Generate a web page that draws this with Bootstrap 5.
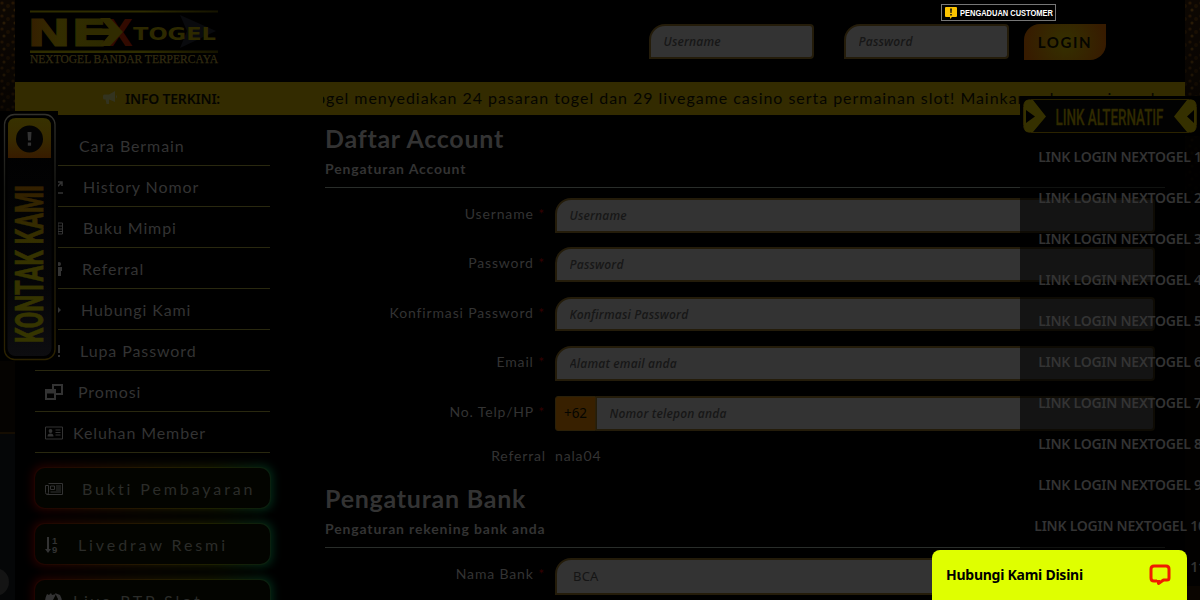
<!DOCTYPE html>
<html lang="id">
<head>
  <meta charset="UTF-8">
  <title>Nextogel - Daftar Account</title>
  <link href="https://cdn.jsdelivr.net/npm/bootstrap@5.3.3/dist/css/bootstrap.min.css" rel="stylesheet">
  <style>
    body {
      height: 600px;
      overflow: hidden;
      position: relative;
      background: #050301;
      color: #333;
      font-family: Lato, "Open Sans", sans-serif;
      font-size: 14px;
    }
    .backdrop { position: absolute; inset: 0; }
    .page { width: 1170px; height: 600px; background: #000; position: relative; }
    .topbar { height: 82px; padding: 10px 79px 0 15px; }
    .login-form { gap: 30px; padding-top: 14px; }
    .field {
      background: #333;
      border: 2px solid #241c0a;
      border-radius: 16px 4px 4px 0;
      color: #151515;
      height: 35px;
      padding: 0 12.5px;
      font-size: 12px;
      letter-spacing: .18px;
      box-shadow: none;
    }
    .field::placeholder { color: #171717; opacity: 1; font-family: "Open Sans", sans-serif; font-style: italic; font-weight: 600; }
    .login-form .field { width: 165px; }
    .btn-login {
      width: 82px; height: 36px; margin-left: -15px; padding: 0;
      border: 0; border-radius: 16px 0;
      background: radial-gradient(circle at 50% 50%, #353000 0, #352b00 25%, #371b00 90%);
      color: #050500; font-weight: 700; font-size: 15px; letter-spacing: 1.6px;
    }
    .infobar { height: 33px; background: #332b00; color: #050500; }
    .info-title { width: 308px; padding-left: 88px; padding-bottom: 1px; gap: 7px; font-family: "Noto Sans", sans-serif; font-weight: 600; font-size: 14px; letter-spacing: -.2px; }
    .info-text { width: 842px; overflow: hidden; white-space: nowrap; font-size: 16px; letter-spacing: .96px; line-height: 31px; }
    .info-text span { margin-left: -7px; }
    .sidebar { width: 275px; flex: none; padding: 10px 20px 0; }
    .side-item { height: 41px; border-bottom: 1px solid #29280f; padding: 2px 0 0 10px; font-size: 16px; letter-spacing: .9px; }
    .side-item svg, .glow-btn svg { width: 18px; height: 16px; flex: none; }
    .glow-btn { position: relative; height: 40px; margin-top: 16px; border-radius: 10px; background: #030400; padding: 1px 0 0 10px; font-size: 16px; letter-spacing: 2.9px; white-space: nowrap; color: #2b2c29; }
    .glow-btn:first-child { margin-top: 15px; }
    .glow-btn::before { content: ""; position: absolute; inset: -1px; z-index: -1; border-radius: 11px; background: linear-gradient(90deg, #200400, #241a00 50%, #1d2000 75%, #0a200f); }
    .glow-btn::after { content: ""; position: absolute; inset: -3px; z-index: -2; border-radius: 12px; filter: blur(4px); background: linear-gradient(90deg, #240000, #1b1200 45%, #161a00 75%, #002a18); }
    .glows { position: relative; z-index: 0; }
    .form-area { width: 875px; flex: none; padding: 6px 0 0 35px; }
    .form-area h2 { font-size: 25px; font-weight: 700; letter-spacing: .75px; line-height: 34px; margin: 0; }
    .form-area h3 { font-size: 14px; font-weight: 700; letter-spacing: .85px; line-height: 20px; margin: 4px 0 0; }
    .divider { width: 840px; height: 1px; background: #292d2a; margin: 8px 0 10px; }
    .form-row { height: 49.4px; }
    .form-row label { width: 230px; flex: none; padding: 5px 10px 0 0; text-align: right; font-size: 14px; letter-spacing: .85px; }
    .form-row label i { color: #330000; font-style: normal; }
    .form-row .field { width: 600px; height: 34.5px; flex: none; }
    .form-row .prefix { width: 41px; height: 35px; flex: none; background: #382000; border: 1px solid #2b2008; border-radius: 3px 0 0 3px; color: #050500; font-family: "Noto Sans", sans-serif; font-size: 13.5px; }
    .form-row .phone { width: 559px; height: 35px; border-radius: 0 4px 4px 0; border-left-width: 1px; }
    .form-row .bank { height: 37px; padding-left: 16px; font-size: 13px; font-family: "Noto Sans", sans-serif; }
    .referral { height: 36px; letter-spacing: .85px; line-height: 20px; padding-top: 1px; }
    .referral label { width: 230px; padding-right: 9px; text-align: right; }
    .link-panel { position: absolute; left: 1020px; top: 96px; width: 200px; height: 504px; background: rgba(0, 0, 0, .6); }
    .link-panel svg { display: block; }
    .link-panel a { height: 41px; display: block; text-align: center; white-space: nowrap; color: #333; text-decoration: none; font-family: "Noto Sans", sans-serif; font-weight: 600; font-size: 14px; line-height: 41px; letter-spacing: -.25px; }
    .contact-tab { position: absolute; left: 0; top: 111px; }
    .complaint { position: absolute; left: 941px; top: 4px; width: 115px; height: 17px; border: 1px solid #777; background: #000; padding-left: 3px; gap: 3px; }
    .chat-bar { position: absolute; left: 932px; top: 550px; width: 255px; height: 50px; background: #dfff00; border-radius: 8px 8px 0 0; color: #000; padding: 0 16px 1px 14px; font-family: "Noto Sans", sans-serif; font-weight: 700; font-size: 14px; letter-spacing: -.25px; }
  </style>
</head>
<body>
<!-- dim casino background at the page edges -->
<svg class="backdrop" width="1200" height="600">
  <defs>
    <pattern id="sparks" width="11" height="13" patternUnits="userSpaceOnUse">
      <circle cx="2" cy="3" r="1.6" fill="#261604"/><circle cx="8" cy="6" r="1.9" fill="#1c1002"/><circle cx="4" cy="10" r="1.500" fill="#2d1d06"/>
    </pattern>
    <linearGradient id="fadeDown" x2="0" y2="1"><stop offset="0" stop-color="#000" stop-opacity="0"/><stop offset="1" stop-color="#000"/></linearGradient>
  </defs>
  <rect width="1200" height="230" fill="#0d0702"/>
  <rect width="15" height="230" fill="url(#sparks)"/>
  <rect x="1185" width="15" height="230" fill="url(#sparks)"/>
  <rect width="1200" height="230" fill="url(#fadeDown)"/>
  <rect y="432" width="15" height="168" fill="#050607"/>
  <rect y="432" width="15" height="2" fill="#150d02"/>
  <circle cx="-5" cy="582" r="14" fill="#141414"/>
  <rect x="1185" y="586" width="15" height="14" fill="#1a0d02"/>
</svg>

<div class="page mx-auto">
  <header class="topbar d-flex justify-content-between align-items-start">
    <svg width="190" height="56" viewBox="30 10 190 56">
      <defs>
        <linearGradient id="gold"><stop offset="0" stop-color="#351d00"/><stop offset=".4" stop-color="#332d00"/><stop offset="1" stop-color="#2c2a00"/></linearGradient>
        <linearGradient id="goldLine"><stop offset="0" stop-color="#2e2c00"/><stop offset=".6" stop-color="#2e2c00"/><stop offset="1" stop-color="#151300"/></linearGradient>
      </defs>
      <path d="M180 15l36 16-36 17 7-17z" fill="#090a0d"/>
      <rect x="30" y="10.500" width="188" height="2" fill="url(#goldLine)"/>
      <rect x="30" y="50.500" width="188" height="2.500" fill="url(#goldLine)"/>
      <text x="27" y="45.500" font-family="DejaVu Sans" font-weight="700" font-size="38" fill="url(#gold)" stroke="url(#gold)" stroke-width=".8" textLength="80" lengthAdjust="spacingAndGlyphs">NE</text>
      <text x="105" y="45.500" font-family="DejaVu Sans" font-weight="700" font-size="38" fill="#320a00" textLength="28" lengthAdjust="spacingAndGlyphs">X</text>
      <path d="M84 28.500h25l-9-10.500h10l13 14-13 14h-10l9-11H84z" fill="#302b00"/>
      <text x="133" y="40" font-family="DejaVu Sans" font-weight="700" font-size="18.500" fill="#2d2900" textLength="83" lengthAdjust="spacingAndGlyphs">TOGEL</text>
      <text x="30" y="62.800" font-family="Liberation Serif" font-size="11.500" fill="#332c10" stroke="#332c10" stroke-width=".25" textLength="188" lengthAdjust="spacingAndGlyphs">NEXTOGEL BANDAR TERPERCAYA</text>
    </svg>
    <form class="login-form d-flex">
      <input type="text" class="form-control field" placeholder="Username">
      <input type="password" class="form-control field" placeholder="Password">
      <button type="button" class="btn btn-login">LOGIN</button>
    </form>
  </header>

  <div class="infobar d-flex">
    <div class="info-title d-flex align-items-center">
      <svg width="15" height="14" viewBox="0 0 15 14" fill="#33331f"><path d="M12 0v11L6 8.500V13H3.500L2.500 8.500H1Q0 8.500 0 7V5q0-1.500 1-1.500h5zM13 4q2 1.500 0 3.500z"/></svg>
      INFO TERKINI:
    </div>
    <div class="info-text"><span>ogel menyediakan 24 pasaran togel dan 29 livegame casino serta permainan slot! Mainkan sekarang juga dan menangkan</span></div>
  </div>

  <div class="d-flex">
    <aside class="sidebar">
      <div class="side-item d-flex align-items-center"><svg></svg><span style="margin-left:16px">Cara Bermain</span></div>
      <div class="side-item d-flex align-items-center">
        <svg viewBox="0 0 18 16" fill="none" stroke="#333" stroke-width="1.500"><path d="M1 1v13h17M4 11l4-5 3 3 6-6M13 3h4v4"/></svg><span style="margin-left:20px">History Nomor</span>
      </div>
      <div class="side-item d-flex align-items-center">
        <svg viewBox="0 0 18 16" fill="none" stroke="#333"><path d="M1 3h16.500v11H1zM13 3v11M13 6h4M13 9h4M13 11.500h4"/></svg><span style="margin-left:20px">Buku Mimpi</span>
      </div>
      <div class="side-item d-flex align-items-center">
        <svg viewBox="0 0 18 16" fill="#333"><circle cx="4" cy="4" r="2"/><circle cx="14" cy="3" r="2"/><path d="M11 6h6v4h-1v5h-4v-5h-1zM1 7h6v4H6v4H2v-4H1z"/></svg><span style="margin-left:19px">Referral</span>
      </div>
      <div class="side-item d-flex align-items-center">
        <svg viewBox="0 0 18 16" fill="#333"><path d="M0 2h10l6 6-5 5H0z"/></svg><span style="margin-left:18px">Hubungi Kami</span>
      </div>
      <div class="side-item d-flex align-items-center">
        <svg viewBox="0 0 18 16" fill="#333"><path d="M13 2h2v8h-2zM13 12h2v2h-2z"/></svg><span style="margin-left:17px">Lupa Password</span>
      </div>
      <div class="side-item d-flex align-items-center">
        <svg viewBox="0 0 18 16" fill="none" stroke="#333" stroke-width="2"><path d="M8 5V1h9v9h-6M1 6h9v9H1z"/><path d="M1 7.500h9" stroke-width="4"/></svg><span style="margin-left:15px">Promosi</span>
      </div>
      <div class="side-item d-flex align-items-center">
        <svg viewBox="0 0 18 16" fill="#333"><path d="M.5 2h17v12H.5z" fill="none" stroke="#333"/><circle cx="5.500" cy="6" r="1.900"/><path d="M2.500 11.500q0-3 3-3t3 3zM10.500 4.500h5v1h-5zM10.500 7h5v1h-5zM10.500 9.500h5v1h-5z"/></svg><span style="margin-left:10px">Keluhan Member</span>
      </div>
      <div class="glows">
        <div class="glow-btn d-flex align-items-center">
          <svg viewBox="0 0 18 16" fill="none" stroke="#333"><path d="M3.500 2.500h14v11h-15q-2 0-2-2v-7h3v7q0 2-1.500 2M5.500 5h4v3.500h-4zM11 5h5M11 7h5M11 9h5M5.500 11h10.500"/></svg><span style="margin-left:19px">Bukti Pembayaran</span>
        </div>
        <div class="glow-btn d-flex align-items-center">
          <svg viewBox="0 0 18 16" fill="#333"><path d="M2 0h2v12h2l-3 4-3-4h2z"/><text x="7" y="7" font-family="Liberation Sans" font-weight="700" font-size="9.500">1</text><text x="7" y="16" font-family="Liberation Sans" font-weight="700" font-size="9.500">9</text></svg><span style="margin-left:15px">Livedraw Resmi</span>
        </div>
        <div class="glow-btn d-flex align-items-center">
          <svg viewBox="0 0 18 16" fill="#333"><path d="M2 1q-5 10 3 14h6q9-4 4-13l-5-2 3 6-1 4-4-3 3-6-4 1-1-2-2 2z"/></svg><span style="margin-left:10px">Live RTP Slot</span>
        </div>
      </div>
    </aside>

    <main class="form-area">
      <h2>Daftar Account</h2>
      <h3>Pengaturan Account</h3>
      <div class="divider"></div>
      <div class="form-row d-flex"><label>Username <i>*</i></label><input class="form-control field" placeholder="Username"></div>
      <div class="form-row d-flex"><label>Password <i>*</i></label><input class="form-control field" placeholder="Password"></div>
      <div class="form-row d-flex"><label>Konfirmasi Password <i>*</i></label><input class="form-control field" placeholder="Konfirmasi Password"></div>
      <div class="form-row d-flex"><label>Email <i>*</i></label><input class="form-control field" placeholder="Alamat email anda"></div>
      <div class="form-row d-flex">
        <label>No. Telp/HP <i>*</i></label>
        <span class="prefix d-flex align-items-center justify-content-center">+62</span>
        <input class="form-control field phone" placeholder="Nomor telepon anda">
      </div>
      <div class="d-flex referral"><label>Referral</label><span>nala04</span></div>
      <h2>Pengaturan Bank</h2>
      <h3>Pengaturan rekening bank anda</h3>
      <div class="divider"></div>
      <div class="form-row d-flex"><label>Nama Bank <i>*</i></label><div class="form-control field bank d-flex align-items-center">BCA</div></div>
    </main>
  </div>
</div>

<nav class="link-panel">
  <svg width="180" height="40" viewBox="1020 96 180 40">
    <rect x="1020" y="96" width="180" height="40" fill="#000"/>
    <rect x="1023.500" y="99.500" width="173" height="33" rx="7" fill="#020202" stroke="#2b2300"/>
    <path d="M1024 105q0-5 4-5h5l13 16.500-13 15.500h-5q-4 0-4-5zM1196 105q0-5-4-5h-5l-13 16.500 13 15.500h5q4 0 4-5z" fill="#353000"/>
    <path d="M1026 110l9 6.500-9 6.500zM1194 110l-7 6.500 7 6.500z" fill="#000"/>
    <text x="1055.500" y="124.500" font-family="Roboto" font-weight="500" font-size="21.500" fill="#302a00" stroke="#302a00" stroke-width=".3" textLength="108" lengthAdjust="spacingAndGlyphs">LINK ALTERNATIF</text>
  </svg>
  <a href="#">LINK LOGIN NEXTOGEL 1</a>
  <a href="#">LINK LOGIN NEXTOGEL 2</a>
  <a href="#">LINK LOGIN NEXTOGEL 3</a>
  <a href="#">LINK LOGIN NEXTOGEL 4</a>
  <a href="#">LINK LOGIN NEXTOGEL 5</a>
  <a href="#">LINK LOGIN NEXTOGEL 6</a>
  <a href="#">LINK LOGIN NEXTOGEL 7</a>
  <a href="#">LINK LOGIN NEXTOGEL 8</a>
  <a href="#">LINK LOGIN NEXTOGEL 9</a>
  <a href="#">LINK LOGIN NEXTOGEL 10</a>
  <a href="#">LINK LOGIN NEXTOGEL 11</a>
</nav>

<svg class="contact-tab" width="58" height="250" viewBox="0 111 58 250">
  <defs>
    <linearGradient id="tabTop" x2="0" y2="1"><stop offset="0" stop-color="#373100"/><stop offset=".5" stop-color="#382b00"/><stop offset="1" stop-color="#371b00"/></linearGradient>
    <linearGradient id="tabBody" x2="0" y2="1"><stop offset="0" stop-color="#000"/><stop offset=".7" stop-color="#050507"/><stop offset="1" stop-color="#0d0d10"/></linearGradient>
    <linearGradient id="tabEdge" x2="0" y2="1"><stop offset="0" stop-color="#33322c"/><stop offset=".3" stop-color="#1a1a16"/><stop offset="1" stop-color="#2c2200"/></linearGradient>
    <linearGradient id="tabText"><stop offset="0" stop-color="#353500"/><stop offset=".6" stop-color="#353200"/><stop offset="1" stop-color="#331f00"/></linearGradient>
  </defs>
  <rect y="111" width="58" height="250" fill="#000"/>
  <rect x="4.500" y="114.500" width="50.500" height="245" rx="10" fill="#000" stroke="url(#tabEdge)" stroke-width="1.300"/>
  <rect x="7.500" y="118" width="44" height="238" rx="8" fill="url(#tabBody)"/>
  <path d="M8 158v-32q0-8 8-8h27q8 0 8 8v32z" fill="url(#tabTop)"/>
  <circle cx="29.500" cy="139" r="13.500" fill="#030303"/>
  <path d="M27.500 132h4l-.5 8.500h-3zM27.800 142.500h3.300v3.300h-3.300z" fill="#333"/>
  <text transform="translate(43 343) rotate(-90)" font-family="Roboto" font-weight="700" font-size="38.500" fill="url(#tabText)" stroke="url(#tabText)" stroke-width=".7" textLength="158" lengthAdjust="spacingAndGlyphs">KONTAK KAMI</text>
</svg>

<div class="complaint d-flex align-items-center">
  <svg width="12" height="12" viewBox="0 0 12 12"><path d="M1 0h10q1 0 1 1v8q0 1-1 1H7l-2 2v-2H1q-1 0-1-1V1q0-1 1-1z" fill="#fcc400"/><path d="M5.100 1.500h1.800L6.600 6H5.400zM5.200 7h1.600v1.500H5.200z" fill="#111"/></svg>
  <svg width="94" height="12"><text x="0" y="8.800" font-family="Liberation Sans" font-weight="700" font-size="8.500" fill="#fff" textLength="93" lengthAdjust="spacingAndGlyphs">PENGADUAN CUSTOMER</text></svg>
</div>

<div class="chat-bar d-flex align-items-center justify-content-between">
  <span>Hubungi Kami Disini</span>
  <svg width="22" height="22" viewBox="0 0 22 22" fill="none" stroke="#f01c00" stroke-width="3" stroke-linejoin="round"><path d="M8 17H5q-3 0-3-3V5q0-3 3-3h12q3 0 3 3v9q0 2-2 2h-3.500L9.500 19.500V16"/></svg>
</div>
<script src="https://cdn.jsdelivr.net/npm/bootstrap@5.3.3/dist/js/bootstrap.bundle.min.js"></script>
</body>
</html>
